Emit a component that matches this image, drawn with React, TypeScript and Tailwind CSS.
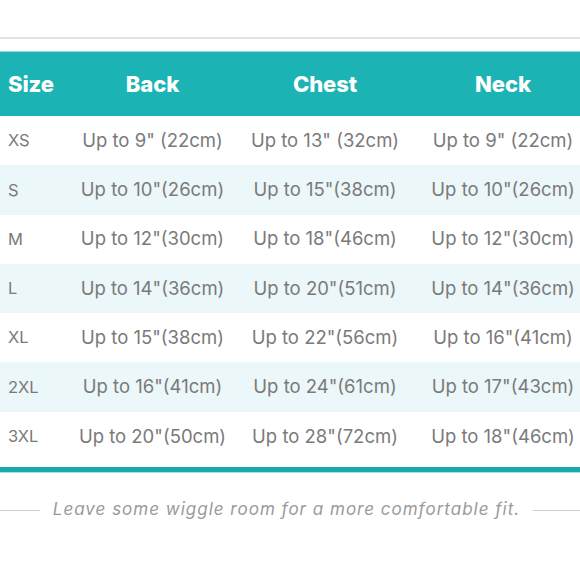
import React from "react";

const rows: [string, string, string, string][] = [
  ["XS", "Up to 9\" (22cm)", "Up to 13\" (32cm)", "Up to 9\" (22cm)"],
  ["S", "Up to 10\"(26cm)", "Up to 15\"(38cm)", "Up to 10\"(26cm)"],
  ["M", "Up to 12\"(30cm)", "Up to 18\"(46cm)", "Up to 12\"(30cm)"],
  ["L", "Up to 14\"(36cm)", "Up to 20\"(51cm)", "Up to 14\"(36cm)"],
  ["XL", "Up to 15\"(38cm)", "Up to 22\"(56cm)", "Up to 16\"(41cm)"],
  ["2XL", "Up to 16\"(41cm)", "Up to 24\"(61cm)", "Up to 17\"(43cm)"],
  ["3XL", "Up to 20\"(50cm)", "Up to 28\"(72cm)", "Up to 18\"(46cm)"],
];

export default function App() {
  return (
    <div
      className="w-[580px] h-[580px] bg-white overflow-hidden"
      style={{ fontFamily: "Inter, 'Noto Sans', sans-serif" }}
    >
      <div className="h-[37px]" />
      <div className="h-[2px] bg-[#e4e4e4]" />
      <div className="h-[12px]" />
      <div className="w-[591px]">
        <div className="grid grid-cols-[70px_165px_180px_176px] h-[65px] items-center bg-[#1cb3b4] border-t border-[#8fe0e0] text-white font-extrabold text-[22px] tracking-[-0.1px]">
          <div className="pl-[8px]">Size</div>
          <div className="text-center">Back</div>
          <div className="text-center">Chest</div>
          <div className="text-center">Neck</div>
        </div>
        {rows.map((r, i) => (
          <div
            key={r[0]}
            className={`grid grid-cols-[70px_165px_180px_176px] h-[49.3px] items-center text-[#7a7a7a] text-[18.5px] ${
              i % 2 === 1 ? "bg-[#ebf7f9]" : "bg-white"
            }`}
          >
            <div className="pl-[8px] text-[16.5px]">{r[0]}</div>
            <div className="text-center whitespace-nowrap">{r[1]}</div>
            <div className="text-center whitespace-nowrap">{r[2]}</div>
            <div className="text-center whitespace-nowrap">{r[3]}</div>
          </div>
        ))}
        <div className="h-[6px]" />
        <div className="h-[6px] bg-[#1aa9aa] border-b border-[#9fe3e3]" />
      </div>
      <div className="flex items-center mt-[26px] h-[22px]">
        <div className="w-[40px] h-[1px] bg-[#cfcfcf]" />
        <div className="flex-1 text-center italic text-[#9a9a9a] text-[17px] tracking-[1px] whitespace-nowrap">
          Leave some wiggle room for a more comfortable fit.
        </div>
        <div className="w-[47px] h-[1px] bg-[#cfcfcf]" />
      </div>
    </div>
  );
}
